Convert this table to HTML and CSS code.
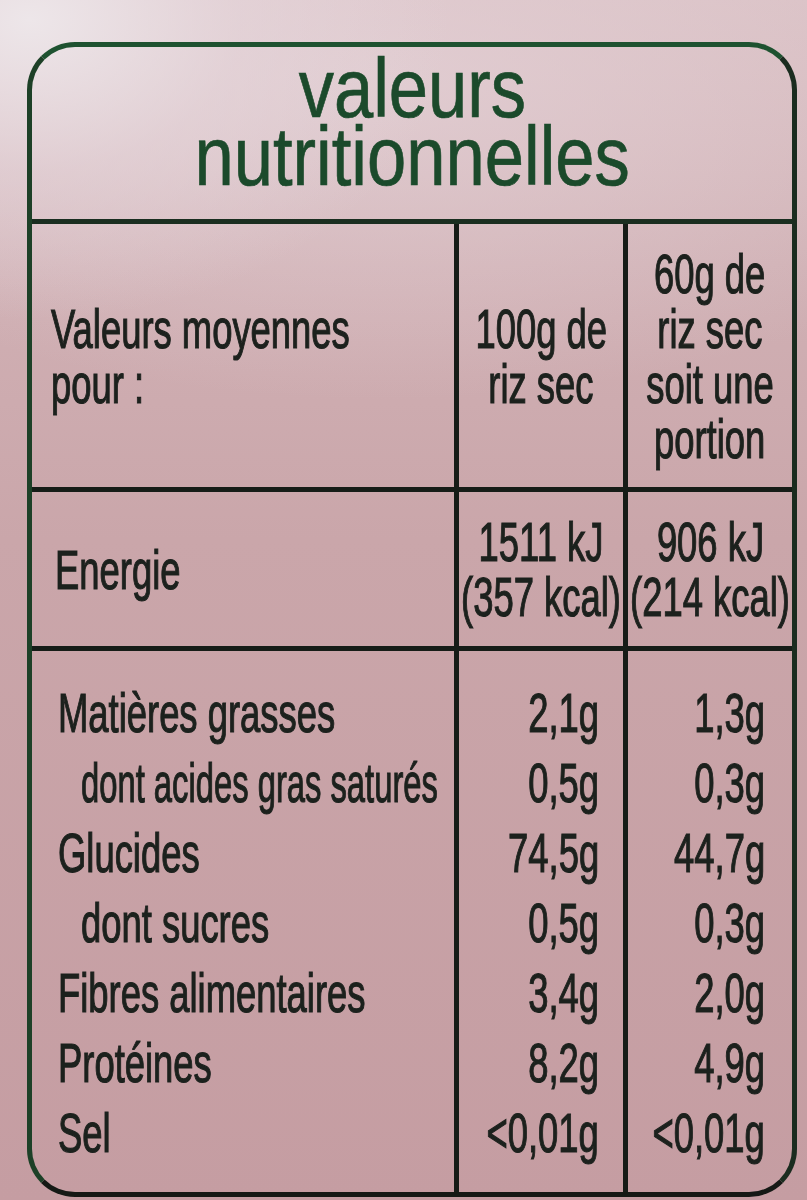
FILE: index.html
```html
<!DOCTYPE html>
<html lang="fr">
<head>
<meta charset="utf-8">
<title>Valeurs nutritionnelles</title>
<link rel="stylesheet" href="styles.css">
</head>
<body>
<div class="label">
  <div class="title">
    <span class="tl">valeurs</span>
    <span class="tl">nutritionnelles</span>
  </div>

  <div class="row head">
    <div class="cell c-left head-left">
      <span class="t">Valeurs moyennes</span>
      <span class="t">pour :</span>
    </div>
    <div class="cell c-mid">
      <span class="t">100g de</span>
      <span class="t">riz sec</span>
    </div>
    <div class="cell c-mid">
      <span class="t">60g de</span>
      <span class="t">riz sec</span>
      <span class="t">soit une</span>
      <span class="t">portion</span>
    </div>
  </div>

  <div class="row energy">
    <div class="cell c-left energy-left">
      <span class="t">Energie</span>
    </div>
    <div class="cell c-mid">
      <span class="t">1511 kJ</span>
      <span class="t">(357 kcal)</span>
    </div>
    <div class="cell c-mid">
      <span class="t">906 kJ</span>
      <span class="t">(214 kcal)</span>
    </div>
  </div>

  <div class="row nutr">
    <div class="cell c-left nutr-left">
      <span class="t">Matières grasses</span>
      <span class="t sub narrow">dont acides gras saturés</span>
      <span class="t">Glucides</span>
      <span class="t sub">dont sucres</span>
      <span class="t">Fibres alimentaires</span>
      <span class="t">Protéines</span>
      <span class="t">Sel</span>
    </div>
    <div class="cell c-right">
      <span class="t">2,1g</span>
      <span class="t">0,5g</span>
      <span class="t">74,5g</span>
      <span class="t">0,5g</span>
      <span class="t">3,4g</span>
      <span class="t">8,2g</span>
      <span class="t">&lt;0,01g</span>
    </div>
    <div class="cell c-right c-right2">
      <span class="t">1,3g</span>
      <span class="t">0,3g</span>
      <span class="t">44,7g</span>
      <span class="t">0,3g</span>
      <span class="t">2,0g</span>
      <span class="t">4,9g</span>
      <span class="t">&lt;0,01g</span>
    </div>
  </div>
</div>
</body>
</html>
```

FILE: styles.css
```css
html, body {
  margin: 0;
  padding: 0;
}

body {
  width: 807px;
  height: 1200px;
  overflow: hidden;
  background:
    radial-gradient(ellipse 420px 300px at 30px 20px, rgba(238, 232, 235, 0.95) 0%, rgba(230, 216, 221, 0.55) 50%, rgba(220, 200, 206, 0) 100%),
    radial-gradient(ellipse 700px 320px at 380px 80px, rgba(228, 210, 215, 0.75) 0%, rgba(220, 200, 206, 0) 100%),
    linear-gradient(180deg, #d9bfc3 0%, #d0b0b4 22%, #caa6aa 45%, #c59da2 100%);
  font-family: "Liberation Sans", Arial, sans-serif;
  color: #1c211d;
}

.label {
  box-sizing: border-box;
  margin: 42px 0 0 27px;
  width: 770px;
  height: 1155px;
  border: 5px solid #1a2c1f;
  border-top-color: #1e5230;
  border-left-color: #1d4027;
  border-bottom-color: #151915;
  border-radius: 48px;
  display: flex;
  flex-direction: column;
  filter: blur(0.45px);
}

.title {
  box-sizing: border-box;
  height: 177px;
  padding-top: 7px;
  border-bottom: 5px solid #1a2e20;
  display: flex;
  flex-direction: column;
  align-items: center;
  color: #1b4a2b;
}

.tl {
  display: block;
  font-size: 84px;
  line-height: 68px;
  white-space: nowrap;
  transform: scaleX(0.84);
  transform-origin: center;
  -webkit-text-stroke: 0.7px #1b4a2b;
}

.row {
  display: grid;
  grid-template-columns: 422px 169px 169px;
  box-sizing: border-box;
}

.head {
  height: 268px;
  border-bottom: 5px solid #161c17;
}

.energy {
  height: 159px;
  border-bottom: 5px solid #161c17;
}

.nutr {
  flex: 1;
}

.cell {
  box-sizing: border-box;
  display: flex;
  flex-direction: column;
  justify-content: center;
  min-width: 0;
}

.cell + .cell {
  border-left: 5px solid #161c17;
}

.t {
  display: block;
  font-size: 56px;
  line-height: 55px;
  white-space: nowrap;
  transform: scaleX(0.65);
  -webkit-text-stroke: 1.2px #1c211d;
}

.c-left {
  align-items: flex-start;
  padding-left: 20px;
}

.c-left .t {
  transform-origin: left center;
}

.c-mid {
  align-items: center;
}

.c-mid .t {
  transform-origin: center;
}

.c-right {
  align-items: flex-end;
  padding-right: 24px;
}

.c-right2 {
  padding-right: 27px;
}

.c-right .t {
  transform-origin: right center;
}

.head-left {
  padding-left: 19px;
}

.energy-left {
  padding-left: 23px;
}

.nutr .cell {
  justify-content: flex-start;
  padding-top: 27px;
}

.nutr .t {
  line-height: 70px;
}

.nutr-left {
  padding-left: 26px;
}

.sub {
  margin-left: 23px;
}

.c-left .narrow {
  transform: scaleX(0.585);
}
```
